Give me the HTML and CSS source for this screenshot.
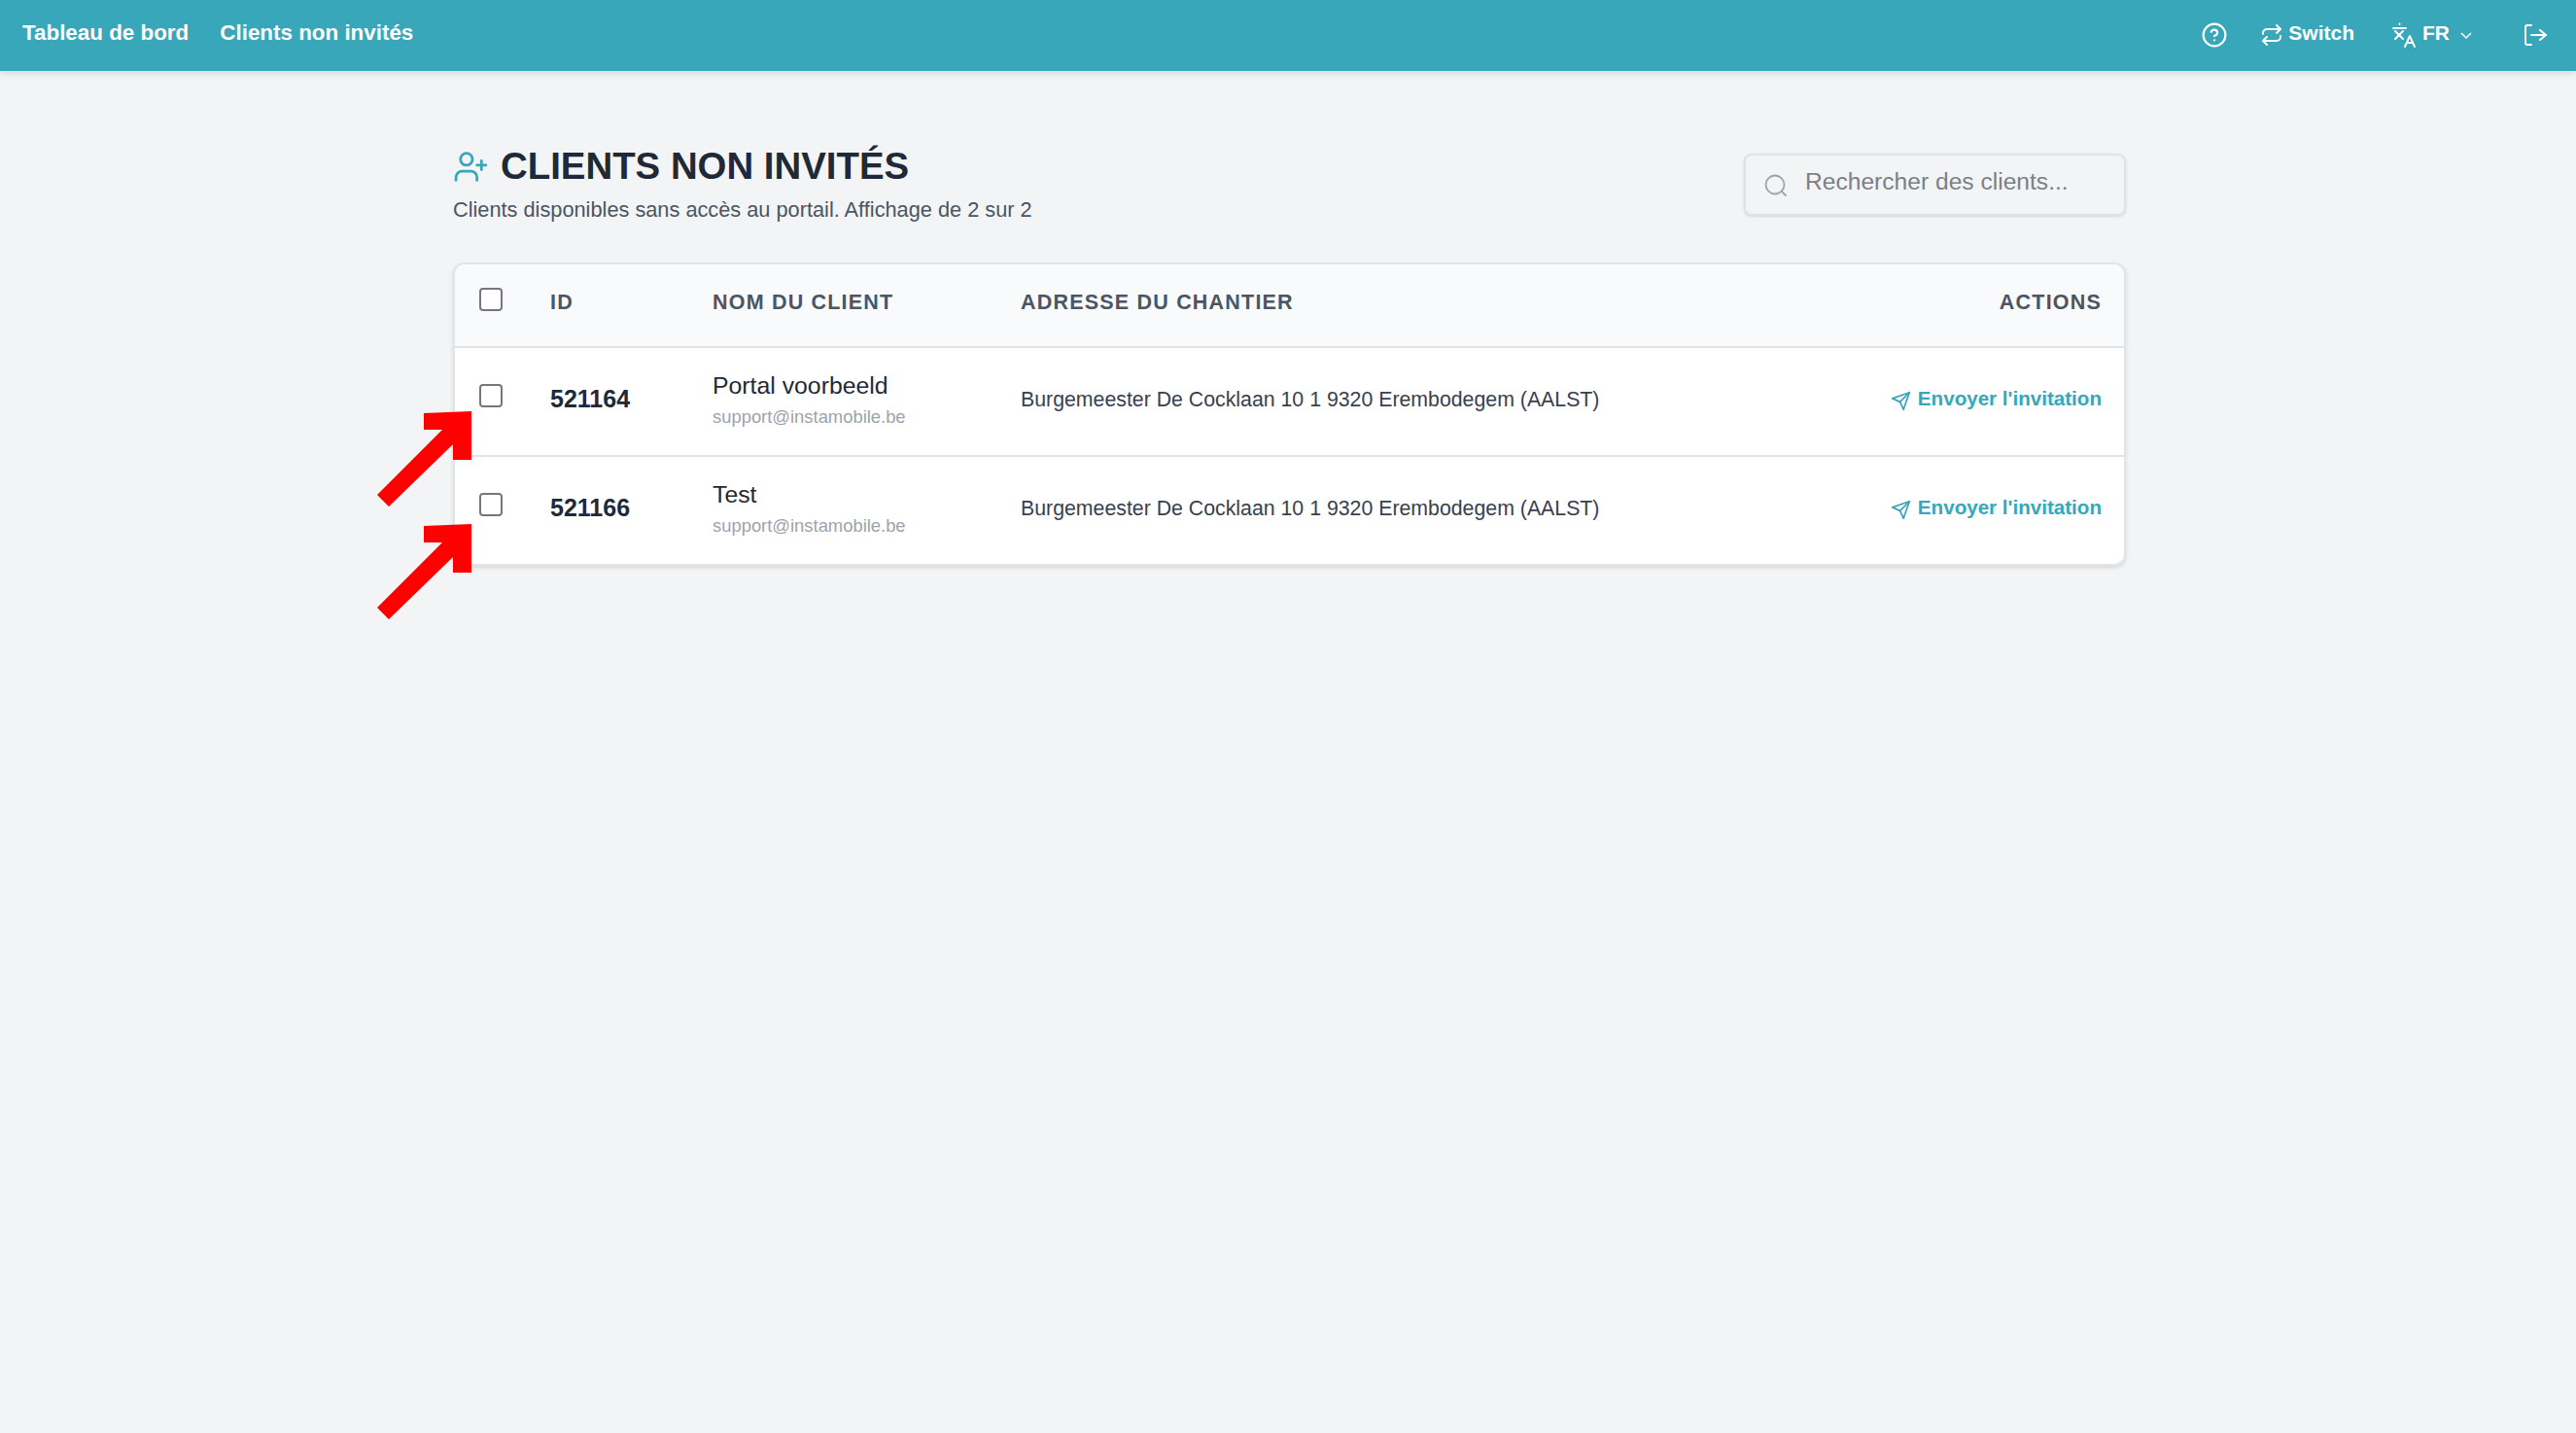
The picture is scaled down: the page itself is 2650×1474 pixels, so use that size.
FILE: index.html
```html
<!DOCTYPE html>
<html lang="fr">
<head>
    <meta charset="UTF-8">
    <meta name="viewport" content="width=device-width, initial-scale=1.0">
    <title>Clients non invités</title>
    <link rel="stylesheet" href="styles.css">
</head>
<body>
    <nav class="navbar">
        <div class="nav_left">
            <a class="nav_link">Tableau de bord</a>
            <a class="nav_link">Clients non invités</a>
        </div>
        <div class="nav_right">
            <svg class="nav_icon help_icon" viewBox="0 0 24 24"><circle cx="12" cy="12" r="10.5"/><path d="M8.9 9a3.1 3.1 0 0 1 6 1c0 2-3 3-3 3"/><path d="M12 17h.01"/></svg>
            <div class="nav_item switch_item">
                <svg class="nav_icon" viewBox="0 0 24 24"><path d="m17 2 4 4-4 4"/><path d="M3 11v-1a4 4 0 0 1 4-4h14"/><path d="m7 22-4-4 4-4"/><path d="M21 13v1a4 4 0 0 1-4 4H3"/></svg>
                <span class="nav_text">Switch</span>
            </div>
            <div class="nav_item lang_item">
                <svg class="nav_icon lang_icon" viewBox="0 0 26 26"><path d="M1 6h13"/><path d="M7.5 1.5v.5"/><path d="m3 9 8 8"/><path d="m3 17 8-8"/><path d="m13 25 5-11 5 11"/><path d="M15 21h6"/></svg>
                <span class="nav_text">FR</span>
                <svg class="chevron" viewBox="0 0 12 12"><path d="m1 4 5 5 5-5"/></svg>
            </div>
            <svg class="nav_icon logout_icon" viewBox="0 0 24 24"><path d="M8 22H4a2 2 0 0 1-2-2V4a2 2 0 0 1 2-2h4"/><path d="m17 17 6-5-6-5"/><path d="M23 12H8"/></svg>
        </div>
    </nav>

    <main class="page_wrap">
        <div class="page_head">
            <div class="head_text">
                <h1 class="page_title">
                    <svg class="title_icon" viewBox="0 0 24 24"><path d="M16 21v-2a4 4 0 0 0-4-4H6a4 4 0 0 0-4 4v2"/><circle cx="9" cy="7" r="4"/><path d="M19 8v6"/><path d="M22 11h-6"/></svg>
                    CLIENTS NON INVITÉS
                </h1>
                <p class="page_sub">Clients disponibles sans accès au portail. Affichage de 2 sur 2</p>
            </div>
            <div class="search_box">
                <svg class="search_icon" viewBox="0 0 24 24"><circle cx="11" cy="11" r="9.5"/><path d="m22 22-4.3-4.3"/></svg>
                <input class="search_input" type="text" placeholder="Rechercher des clients...">
            </div>
        </div>

        <div class="table_card">
            <table class="client_table">
                <thead>
                    <tr>
                        <th class="col_check"><input class="check" type="checkbox"></th>
                        <th class="col_id">ID</th>
                        <th class="col_name">NOM DU CLIENT</th>
                        <th>ADRESSE DU CHANTIER</th>
                        <th class="col_actions">ACTIONS</th>
                    </tr>
                </thead>
                <tbody>
                    <tr>
                        <td><input class="check" type="checkbox"></td>
                        <td class="client_id">521164</td>
                        <td>
                            <div class="client_name">Portal voorbeeld</div>
                            <div class="client_mail">support@instamobile.be</div>
                        </td>
                        <td class="client_addr">Burgemeester De Cocklaan 10 1 9320 Erembodegem (AALST)</td>
                        <td class="col_actions">
                            <a class="invite_link">
                                <svg class="send_icon" viewBox="0 0 24 24"><path d="M22 2 11 13"/><path d="M22 2 15 22l-4-9-9-4z"/></svg>
                                Envoyer l'invitation
                            </a>
                        </td>
                    </tr>
                    <tr>
                        <td><input class="check" type="checkbox"></td>
                        <td class="client_id">521166</td>
                        <td>
                            <div class="client_name">Test</div>
                            <div class="client_mail">support@instamobile.be</div>
                        </td>
                        <td class="client_addr">Burgemeester De Cocklaan 10 1 9320 Erembodegem (AALST)</td>
                        <td class="col_actions">
                            <a class="invite_link">
                                <svg class="send_icon" viewBox="0 0 24 24"><path d="M22 2 11 13"/><path d="M22 2 15 22l-4-9-9-4z"/></svg>
                                Envoyer l'invitation
                            </a>
                        </td>
                    </tr>
                </tbody>
            </table>
        </div>

        <!-- annotation arrows drawn on top of the screenshot -->
        <svg class="arrows" viewBox="0 0 100 232">
            <polygon points="98,0 49,2 49,19 68,19 1,86 13,98 79,34 79,50 98,50"/>
            <polygon points="98,116 49,118 49,135 68,135 1,202 13,214 79,150 79,166 98,166"/>
        </svg>
    </main>
</body>
</html>
```

FILE: styles.css
```css
* { margin: 0; padding: 0; box-sizing: border-box; }
body {
    background: #f3f4f6;
    font-family: "Liberation Sans", Arial, sans-serif;
    color: #1f2937;
    min-height: 1474px;
}

/* top bar */
.navbar {
    height: 73px;
    background: #38a7b9;
    box-shadow: 0 3px 6px rgba(0, 0, 0, 0.1);
    display: flex;
    justify-content: space-between;
    align-items: center;
    padding: 0 30px 0 23px;
    color: #fff;
}
.nav_left { display: flex; gap: 32px; padding-bottom: 6px; }
.nav_link { font-size: 22.4px; font-weight: 700; color: #fff; }
.nav_text { font-size: 21px; font-weight: 700; color: #fff; position: relative; top: -2px; }
.nav_right { display: flex; align-items: center; padding-bottom: 2px; }
.nav_item { display: flex; align-items: center; }
.nav_icon {
    width: 24px;
    height: 24px;
    fill: none;
    stroke: #fff;
    stroke-width: 2;
    stroke-linecap: round;
    stroke-linejoin: round;
    flex: none;
}
.help_icon { width: 26px; height: 26px; margin-right: 34px; }
.switch_item { gap: 5px; margin-right: 38.5px; }
.lang_item { margin-right: 53px; }
.lang_icon { width: 26px; height: 26px; margin-right: 5.5px; stroke-width: 1.9; }
.chevron {
    width: 12px;
    height: 12px;
    margin-left: 11px;
    fill: none;
    stroke: #fff;
    stroke-width: 1.5;
}

/* page */
.page_wrap {
    width: 1721px;
    margin: 0 0 0 466px;
    padding-top: 85px;
    position: relative;
}
.page_head {
    display: flex;
    justify-content: space-between;
    align-items: flex-start;
    height: 112px;
}
.page_title {
    display: flex;
    align-items: center;
    gap: 12px;
    font-size: 38.4px;
    line-height: 42px;
    font-weight: 700;
    color: #1f2937;
    margin-top: -8px;
}
.title_icon {
    width: 37px;
    height: 37px;
    fill: none;
    stroke: #38a7b9;
    stroke-width: 1.8;
    stroke-linecap: round;
    stroke-linejoin: round;
}
.page_sub { font-size: 21.75px; line-height: 26px; color: #4b5563; margin-top: 11px; }

.search_box {
    width: 393px;
    height: 64px;
    display: flex;
    align-items: center;
    gap: 18px;
    padding-left: 19px;
    border: 2px solid #e0e2e6;
    border-radius: 8px;
    background: #f3f4f6;
    box-shadow: 0 1px 3px rgba(0, 0, 0, 0.12);
}
.search_icon {
    width: 24px;
    height: 24px;
    flex: none;
    margin-top: 2px;
    fill: none;
    stroke: #9ca3af;
    stroke-width: 1.8;
    stroke-linecap: round;
}
.search_input {
    flex: 1;
    min-width: 0;
    height: 40px;
    margin-top: -6px;
    border: 0;
    outline: 0;
    background: none;
    font-family: inherit;
    font-size: 24.6px;
    color: #1f2937;
}
.search_input::placeholder { color: #7b7f86; opacity: 1; }

/* table */
.table_card {
    background: #fff;
    border: 2px solid #e2e4e8;
    border-radius: 12px;
    box-shadow: 0 2px 4px rgba(0, 0, 0, 0.12);
    overflow: hidden;
}
.client_table { width: 100%; border-collapse: collapse; table-layout: fixed; }
.client_table th {
    height: 85px;
    background: #f9fafb;
    border-bottom: 2px solid #e2e4e8;
    text-align: left;
    font-size: 21.5px;
    font-weight: 700;
    letter-spacing: 1.2px;
    color: #4b5563;
    padding-bottom: 6px;
}
.client_table td { height: 112px; vertical-align: middle; padding-bottom: 4px; }
.client_table tbody tr + tr td { border-top: 2px solid #e2e4e8; height: 111px; }
.client_table td.client_id { font-size: 25px; font-weight: 700; color: #1f2937; padding-bottom: 6px; }
.col_check { width: 98px; }
.col_id { width: 167px; }
.col_name { width: 317px; }
.client_table th .check { margin-bottom: 6px; }
.check {
    appearance: none;
    display: block;
    width: 24px;
    height: 24px;
    margin: 0 0 8px 25px;
    background: #fff;
    border: 2px solid #74787e;
    border-radius: 4px;
}
.client_name { font-size: 24.8px; line-height: 30px; color: #1f2937; margin-top: -1px; }
.client_mail { font-size: 18.4px; line-height: 22px; color: #9ca3af; margin-top: 6px; }
.client_addr { font-size: 21.3px; color: #374151; white-space: nowrap; }
.client_table .col_actions { width: 300px; text-align: right; padding-right: 23px; }
.invite_link {
    display: inline-flex;
    align-items: center;
    gap: 7px;
    font-size: 20.6px;
    font-weight: 700;
    color: #38a7b9;
    position: relative;
    top: 1px;
}
.send_icon {
    width: 21px;
    height: 21px;
    margin-top: 4px;
    fill: none;
    stroke: #38a7b9;
    stroke-width: 2;
    stroke-linecap: round;
    stroke-linejoin: round;
}

.arrows {
    position: absolute;
    left: -79px;
    top: 350px;
    width: 100px;
    height: 232px;
    fill: #ff0000;
}
```
